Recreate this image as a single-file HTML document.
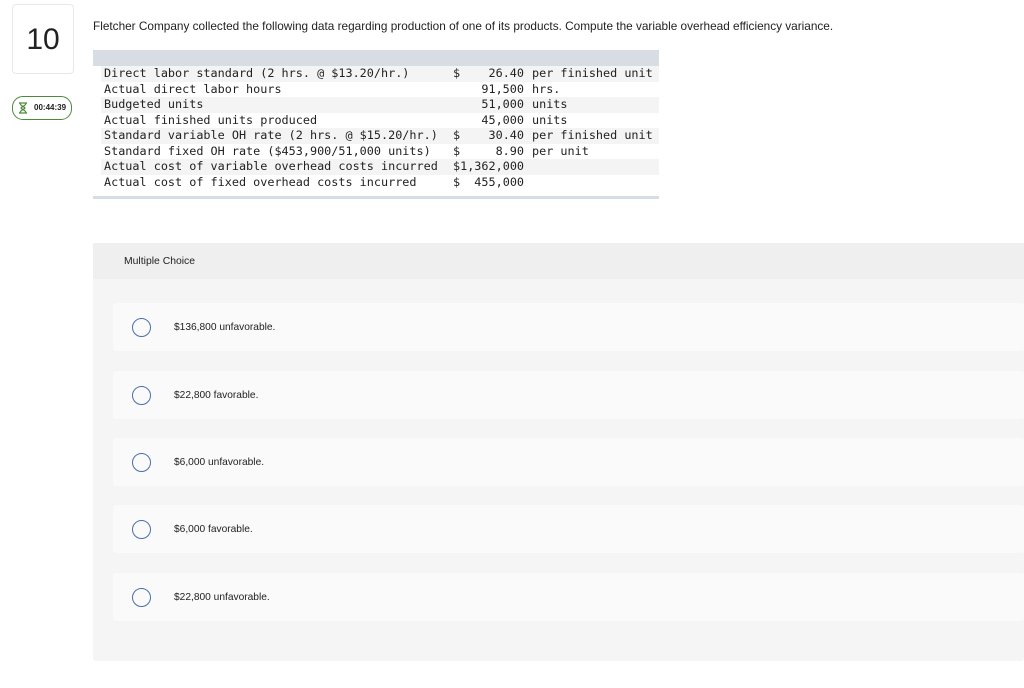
<!DOCTYPE html>
<html><head><style>
body{margin:0;width:1024px;height:688px;background:#fff;position:relative;font-family:"Liberation Sans",sans-serif;overflow:hidden}
.num{position:absolute;left:12px;top:4px;width:60px;height:68px;border:1px solid #e8e8e8;border-radius:4px;font-size:30px;color:#222;text-align:center;line-height:70px}
.timer{position:absolute;left:12px;top:96px;width:58px;height:22px;border:1px solid #4a8a3a;border-radius:11px;font-size:8px;font-weight:bold;color:#222;line-height:22px}
.timer svg{position:absolute;left:5px;top:5px}
.timer span{position:absolute;left:21px}
.q{position:absolute;left:93px;top:19px;font-size:11.8px;color:#222}
.tb{position:absolute;left:93px;top:50px;width:566px;height:16px;background:#d8dce3}
.bb{position:absolute;left:93px;top:196px;width:566px;height:3px;background:#d8dce3}
.row{position:absolute;left:101px;width:558px;height:15.5px;font-family:"DejaVu Sans Mono","Liberation Mono",monospace;font-size:11.8px;color:#222;line-height:15.5px}
.row.s{background:#f4f4f4}
.row b{font-weight:normal;position:absolute}
.c1{left:3px}.c2{left:352px}.c3{right:135px}.c4{left:431px}
.panel{position:absolute;left:93px;top:243px;width:931px;height:418px;background:#f5f5f5;border-radius:3px}
.mh{position:absolute;left:0;top:0;width:931px;height:36px;background:#efefef;font-size:10.4px;color:#222;line-height:38px;padding-left:31px;box-sizing:border-box}
.opt{position:absolute;left:20px;width:911px;height:48px;background:#fafafa;border-radius:3px;font-size:10.2px;color:#222}
.opt i{position:absolute;left:19px;top:15px;width:19px;height:19px;border:1px solid #4a6ea8;border-radius:50%;box-sizing:border-box}
.opt span{position:absolute;left:61px;top:19px}
</style></head><body>
<div class="num">10</div>
<div class="timer"><svg width="10" height="12" viewBox="0 0 10 12"><path d="M1 1h8M1 11h8M2 1c0 3 5 4 5 5s-5 2-5 5M8 1c0 3-5 4-5 5s5 2 5 5" stroke="#4a8a3a" fill="none" stroke-width="1.2"/></svg><span>00:44:39</span></div>
<div class="q">Fletcher Company collected the following data regarding production of one of its products. Compute the variable overhead efficiency variance.</div>
<div class="tb"></div>
<div class="row s" style="top:66px"><b class="c1">Direct labor standard (2 hrs. @ $13.20/hr.)</b><b class="c2">$</b><b class="c3">26.40</b><b class="c4">per finished unit</b></div>
<div class="row" style="top:81.5px"><b class="c1">Actual direct labor hours</b><b class="c3">91,500</b><b class="c4">hrs.</b></div>
<div class="row s" style="top:97px"><b class="c1">Budgeted units</b><b class="c3">51,000</b><b class="c4">units</b></div>
<div class="row" style="top:112.5px"><b class="c1">Actual finished units produced</b><b class="c3">45,000</b><b class="c4">units</b></div>
<div class="row s" style="top:128px"><b class="c1">Standard variable OH rate (2 hrs. @ $15.20/hr.)</b><b class="c2">$</b><b class="c3">30.40</b><b class="c4">per finished unit</b></div>
<div class="row" style="top:143.5px"><b class="c1">Standard fixed OH rate ($453,900/51,000 units)</b><b class="c2">$</b><b class="c3">8.90</b><b class="c4">per unit</b></div>
<div class="row s" style="top:159px"><b class="c1">Actual cost of variable overhead costs incurred</b><b class="c2">$1,362,000</b></div>
<div class="row" style="top:174.5px"><b class="c1">Actual cost of fixed overhead costs incurred</b><b class="c2">$&nbsp;&nbsp;455,000</b></div>
<div class="bb"></div>
<div class="panel">
<div class="mh">Multiple Choice</div>
<div class="opt" style="top:60px"><i></i><span>$136,800 unfavorable.</span></div>
<div class="opt" style="top:127.5px"><i></i><span>$22,800 favorable.</span></div>
<div class="opt" style="top:195px"><i></i><span>$6,000 unfavorable.</span></div>
<div class="opt" style="top:262px"><i></i><span>$6,000 favorable.</span></div>
<div class="opt" style="top:330px"><i></i><span>$22,800 unfavorable.</span></div>
</div>
</body></html>
